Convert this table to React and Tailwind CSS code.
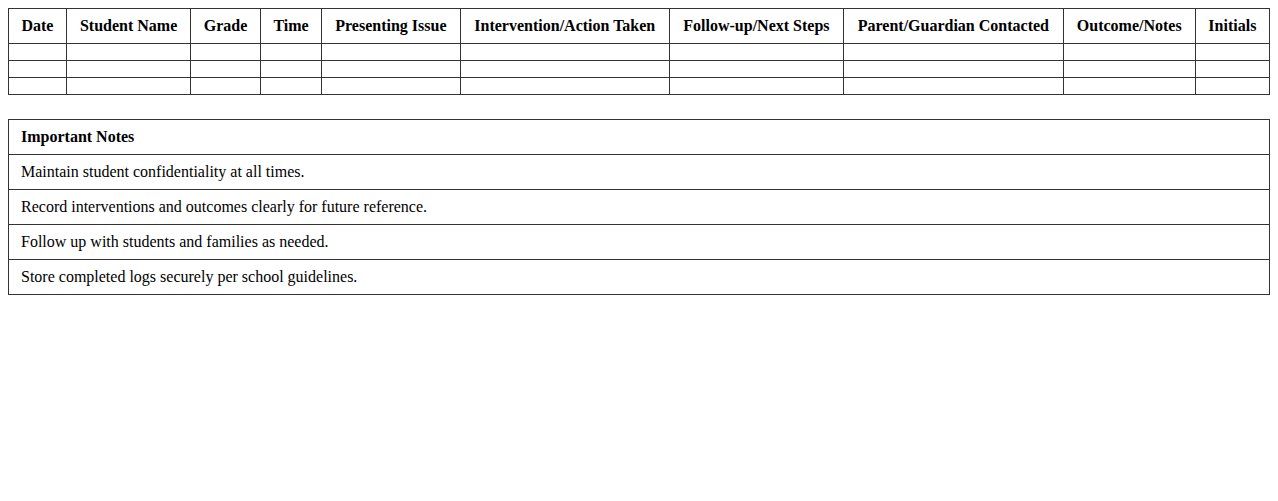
import React from 'react';

const columns = [
  'Date',
  'Student Name',
  'Grade',
  'Time',
  'Presenting Issue',
  'Intervention/Action Taken',
  'Follow-up/Next Steps',
  'Parent/Guardian Contacted',
  'Outcome/Notes',
  'Initials',
];

const notes = [
  'Maintain student confidentiality at all times.',
  'Record interventions and outcomes clearly for future reference.',
  'Follow up with students and families as needed.',
  'Store completed logs securely per school guidelines.',
];

const App = () => {
  return (
    <div className="min-h-screen bg-white p-2 text-black font-['Liberation_Serif','Times_New_Roman',serif] text-base leading-[normal]">
      <table className="w-full border-collapse mb-6">
        <thead>
          <tr>
            {columns.map((c) => (
              <th key={c} className="border border-[#333] px-3 py-2 font-bold text-center">
                {c}
              </th>
            ))}
          </tr>
        </thead>
        <tbody>
          {[0, 1, 2].map((r) => (
            <tr key={r}>
              {columns.map((c) => (
                <td key={c} className="border border-[#333] px-3 py-2"></td>
              ))}
            </tr>
          ))}
        </tbody>
      </table>

      <table className="w-full border-collapse">
        <thead>
          <tr>
            <th className="border border-[#333] px-3 py-2 font-bold text-left">Important Notes</th>
          </tr>
        </thead>
        <tbody>
          {notes.map((n) => (
            <tr key={n}>
              <td className="border border-[#333] px-3 py-2">{n}</td>
            </tr>
          ))}
        </tbody>
      </table>
    </div>
  );
};

export default App;
